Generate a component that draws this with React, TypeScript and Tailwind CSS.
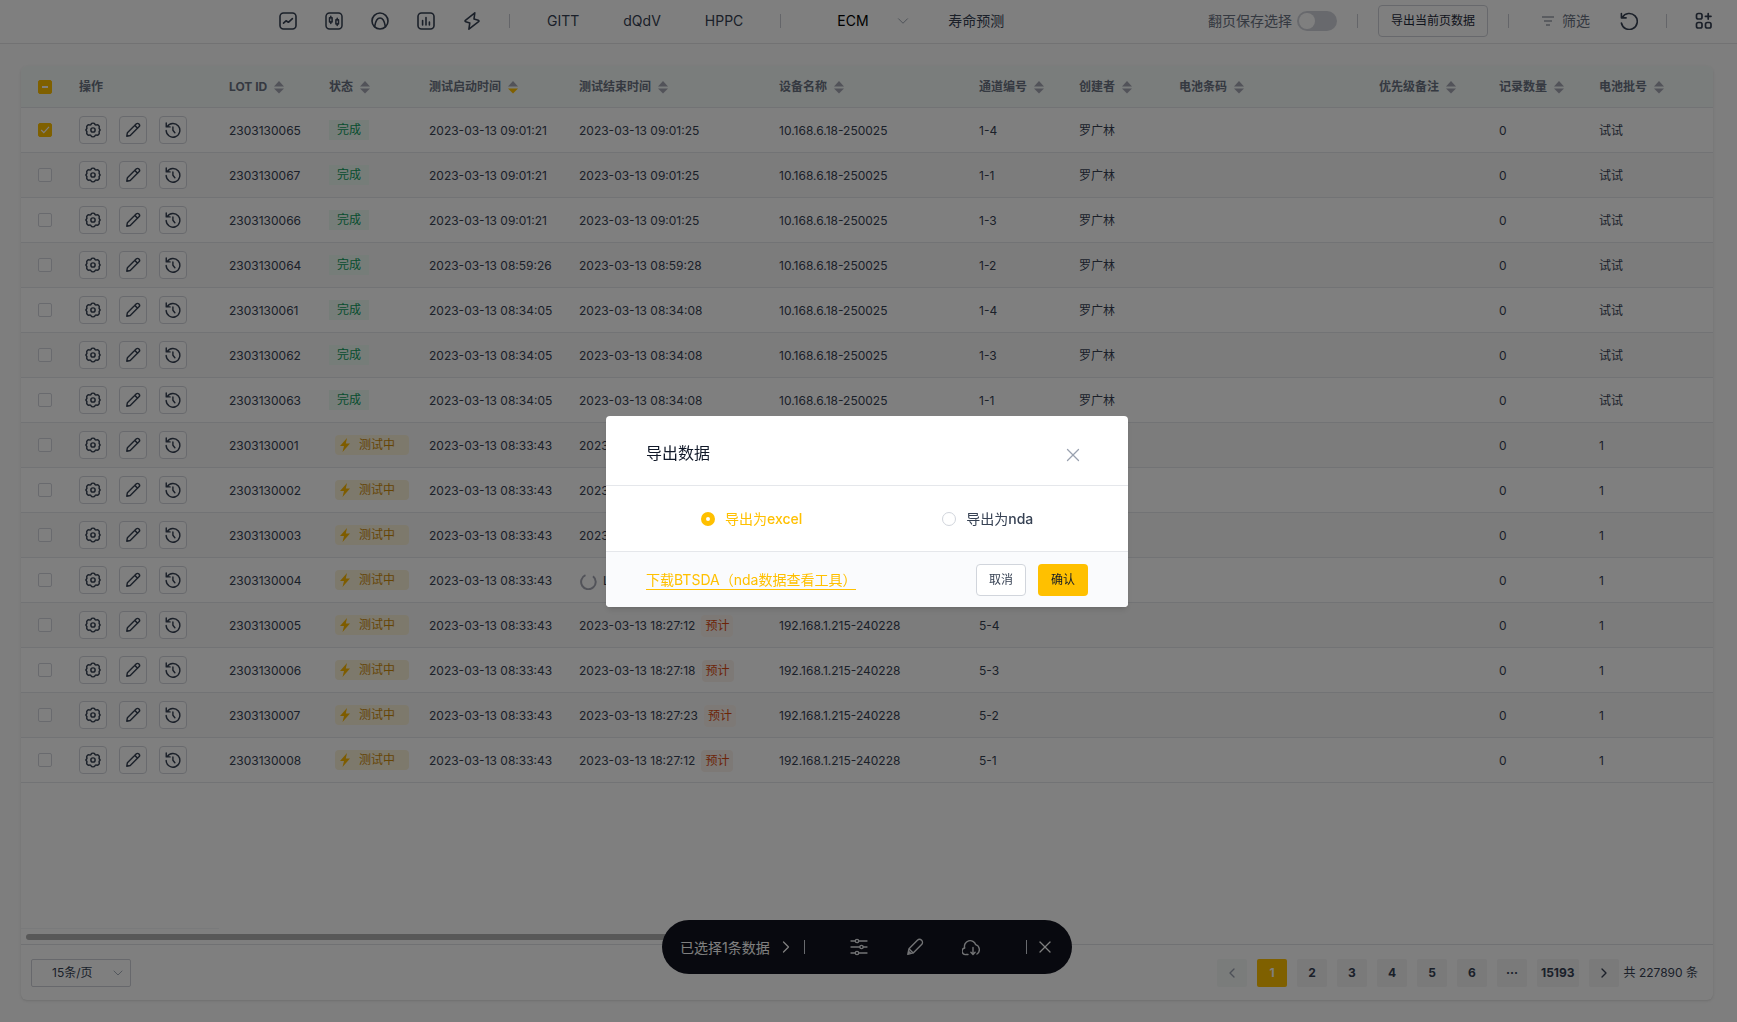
import { useState } from 'react';
import type { ReactNode } from 'react';
import { ChevronDown, ChevronLeft, ChevronRight, X } from 'lucide-react';

type Row = {
    id: string;
    start: string;
    end: string;
    device: string;
    channel: string;
    creator: string;
    batch: string;
    running?: boolean;
    loading?: boolean;
};

const DONE_DEVICE = '10.168.6.18-250025';
const RUN_DEVICE = '192.168.1.215-240228';

const done = (id: string, start: string, end: string, channel: string): Row => ({
    id, start: `2023-03-13 ${start}`, end: `2023-03-13 ${end}`, device: DONE_DEVICE, channel, creator: '罗广林', batch: '试试'
});

const running = (id: string, end: string, channel: string, loading = false): Row => ({
    id, start: '2023-03-13 08:33:43', end: `2023-03-13 ${end}`, device: RUN_DEVICE, channel, creator: '', batch: '1', running: true, loading
});

const rows: Row[] = [
    done('2303130065', '09:01:21', '09:01:25', '1-4'),
    done('2303130067', '09:01:21', '09:01:25', '1-1'),
    done('2303130066', '09:01:21', '09:01:25', '1-3'),
    done('2303130064', '08:59:26', '08:59:28', '1-2'),
    done('2303130061', '08:34:05', '08:34:08', '1-4'),
    done('2303130062', '08:34:05', '08:34:08', '1-3'),
    done('2303130063', '08:34:05', '08:34:08', '1-1'),
    running('2303130001', '18:27:12', '5-8'),
    running('2303130002', '18:27:18', '5-7'),
    running('2303130003', '18:27:12', '5-6'),
    running('2303130004', '18:27:12', '5-5', true),
    running('2303130005', '18:27:12', '5-4'),
    running('2303130006', '18:27:18', '5-3'),
    running('2303130007', '18:27:23', '5-2'),
    running('2303130008', '18:27:12', '5-1')
];

const columns = [
    { title: '操作', width: 'w-[150px]', sort: false },
    { title: 'LOT ID', width: 'w-[100px]', sort: true },
    { title: '状态', width: 'w-[100px]', sort: true },
    { title: '测试启动时间', width: 'w-[150px]', sort: true, desc: true },
    { title: '测试结束时间', width: 'w-[200px]', sort: true },
    { title: '设备名称', width: 'w-[200px]', sort: true },
    { title: '通道编号', width: 'w-[100px]', sort: true },
    { title: '创建者', width: 'w-[100px]', sort: true },
    { title: '电池条码', width: 'w-[200px]', sort: true },
    { title: '优先级备注', width: 'w-[120px]', sort: true },
    { title: '记录数量', width: 'w-[100px]', sort: true },
    { title: '电池批号', width: '', sort: true }
];

/* ---------- icons ---------- */

function Svg({ size = 18, children, width = 1.6 }: { size?: number; children: ReactNode; width?: number }) {
    return (
        <svg width={size} height={size} viewBox="0 0 18 18" fill="none" stroke="currentColor" strokeWidth={width} strokeLinecap="round" strokeLinejoin="round">
            {children}
        </svg>
    );
}

const TrendIcon = () => (
    <Svg>
        <rect x="1" y="1" width="16" height="16" rx="3.5" />
        <path d="M4.5 11.2 7 8.8l2.4 1.5 4-3.7" />
    </Svg>
);

const CandleIcon = () => (
    <Svg width={1.5}>
        <rect x="1" y="1" width="16" height="16" rx="3.5" />
        <path d="M5.8 4.2v1.6M5.8 10v1.6M12.2 6.2v1.6M12.2 12v1.6" />
        <rect x="4.5" y="5.8" width="2.6" height="4.2" />
        <rect x="10.9" y="7.8" width="2.6" height="4.2" />
    </Svg>
);

const ArcIcon = () => (
    <Svg>
        <circle cx="9" cy="9" r="8" />
        <path d="M3.6 14.6C4.6 8.5 6.6 6 9 6s4.4 2.5 5.4 8.6" />
    </Svg>
);

const BarsIcon = () => (
    <Svg>
        <rect x="1" y="1" width="16" height="16" rx="3.5" />
        <path d="M5.6 8.5V13M9 5.5V13M12.4 10v3" />
    </Svg>
);

const BoltIcon = () => (
    <Svg>
        <path d="M11.8.9 2.4 8.3c-.6.5-.4 1.300.300 1.500l4.100 1.100-.9 6.300 9.700-7.500c.6-.5.4-1.300-.3-1.500l-4.300-1.200z" />
    </Svg>
);

const RestartIcon = () => (
    <Svg>
        <path d="M2.3 5.5A8 8 0 1 1 1.4 11M1.4 1.6v4.3h4.7" />
    </Svg>
);

const AppsAddIcon = () => (
    <Svg width={1.7}>
        <rect x="1.5" y="1.5" width="5.5" height="5.5" rx="1.8" />
        <rect x="1.5" y="10.5" width="5.5" height="5.5" rx="1.8" />
        <rect x="10.5" y="10.5" width="5.5" height="5.5" rx="1.8" />
        <path d="M13.2 1.5v5.6M10.4 4.3H16" />
    </Svg>
);

const GearIcon = () => (
    <svg width="16" height="16" viewBox="0 0 24 24" fill="none" stroke="currentColor" strokeWidth="2.2" strokeLinejoin="round">
        <path d="M9.2 3.2c.8-2 4.800-2 5.600 0 .4 1.100 1.600 1.600 2.700 1.200 2-.8 4.600 1.600 3.800 3.700-.4 1.100 0 2.300.8 2.900.6.500.6 1.500 0 2-.8.600-1.200 1.800-.8 2.900.8 2.100-1.800 4.500-3.800 3.700-1.100-.4-2.300.1-2.700 1.200-.8 2-4.800 2-5.600 0-.4-1.100-1.600-1.600-2.700-1.200-2 .8-4.600-1.600-3.800-3.700.4-1.100 0-2.300-.8-2.900-.6-.5-.6-1.500 0-2 .8-.6 1.200-1.800.8-2.900-.8-2.100 1.800-4.500 3.800-3.700 1.100.4 2.300-.1 2.700-1.200z" />
        <circle cx="12" cy="12" r="3.200" />
    </svg>
);

const PencilIcon = () => (
    <Svg size={16} width={1.6}>
        <path d="M2 16l.7-4L12.5 2.2a2.100 2.100 0 0 1 3.200 3.200L5.900 15.200zM11 3.800l3.200 3.200" />
    </Svg>
);

const HistoryIcon = () => (
    <Svg size={16} width={1.6}>
        <path d="M2.5 5.2A7.700 7.700 0 1 1 1.300 9.600M1.400 1.200v4.300h4.300M8.900 5.600v3.700l2.200 2.800" />
    </Svg>
);

const EditIcon = () => (
    <Svg width={1.4}>
        <path d="M1.8 16.3l1.2-5.6 8.4-8.4a2.700 2.700 0 0 1 4.200 4.200l-8.400 8.400zM3 10.7l4.200 4.200M1.8 16.3l1-2.8 1.800 1.800z" />
    </Svg>
);

const SlidersIcon = () => (
    <Svg width={1.3}>
        <path d="M1 3h4.200M8.800 3H17M1 9h8.700M13.300 9H17M1 15h4.200M8.800 15H17" />
        <circle cx="7" cy="3" r="1.700" />
        <circle cx="11.5" cy="9" r="1.700" />
        <circle cx="7" cy="15" r="1.700" />
    </Svg>
);

const CloudIcon = () => (
    <Svg width={1.4}>
        <path d="M6 16.500H4.200A3.300 3.300 0 0 1 2.700 10 5.700 5.700 0 1 1 13.700 6.700a5.200 5.200 0 0 1 1.300 9.300M11 9.500v6.800M8.900 14.300l2.100 2.200 2.100-2.200" />
    </Svg>
);

function SortCaret({ desc }: { desc?: boolean }) {
    return (
        <svg width="10" height="13" viewBox="0 0 10 13">
            <path d="M5 0l5 5.500H0z" fill="#a4a6b3" />
            <path d="M5 12.500L0 7.500h10z" fill={desc ? '#ffc000' : '#a4a6b3'} />
        </svg>
    );
}

/* ---------- small parts ---------- */

const Divider = () => <span className="h-3.5 w-px shrink-0 bg-[#c9cbd3]" />;

function Tick({ label, checked, mixed, onChange }: { label: string; checked: boolean; mixed?: boolean; onChange: () => void }) {
    return (
        <label className="inline-grid place-items-center align-middle">
            <input
                type="checkbox"
                aria-label={label}
                checked={checked}
                onChange={onChange}
                className="col-start-1 row-start-1 size-3.5 appearance-none rounded-xs border border-[#d3d5dc] bg-white checked:border-[#ffc000] checked:bg-[#ffc000]"
            />
            {checked && (
                <svg width="10" height="10" viewBox="0 0 10 10" fill="none" stroke="white" strokeWidth="1.2" className="pointer-events-none col-start-1 row-start-1">
                    {mixed ? <path d="M2 5h6" strokeWidth="2" /> : <path d="M1.2 5l2.6 2.6L9 1.800" />}
                </svg>
            )}
        </label>
    );
}

function RowAction({ label, children }: { label: string; children: ReactNode }) {
    return (
        <button type="button" aria-label={label} className="flex size-7 items-center justify-center rounded border border-[#d3d5dc] bg-white text-gray-700">
            {children}
        </button>
    );
}

function Status({ active }: { active?: boolean }) {
    if (!active) {
        return <span className="flex h-5 w-10 items-center justify-center bg-[#ecfaf2] text-[#0f9d5e]">完成</span>;
    }
    return (
        <span className="ml-1.5 flex h-5 w-[74px] items-center gap-2 rounded bg-[#faf2d9] pl-1 text-[#cc8a0a]">
            <svg width="12" height="14" viewBox="0 0 12 14" fill="#fdb900">
                <path d="M8 0L1 8h4L3.500 14 11 5.500H6.800z" />
            </svg>
            测试中
        </span>
    );
}

/* ---------- page sections ---------- */

function TopBar() {
    const [keep, setKeep] = useState(false);
    const tools = [
        { label: '曲线', icon: <TrendIcon /> },
        { label: '箱线', icon: <CandleIcon /> },
        { label: '分布', icon: <ArcIcon /> },
        { label: '柱状', icon: <BarsIcon /> },
        { label: '快速', icon: <BoltIcon /> }
    ];

    return (
        <header className="flex h-11 shrink-0 items-center justify-between border-b border-[#e4e4e7] bg-white pr-6 pb-px pl-[265px] text-sm text-gray-700">
            <div className="flex items-center">
                {tools.map(t => (
                    <button key={t.label} type="button" aria-label={t.label} className="flex w-[46px] justify-center">
                        {t.icon}
                    </button>
                ))}
                <nav className="ml-3.5 flex items-center">
                    <Divider />
                    <div className="mx-[37px] flex gap-11">
                        <button type="button">GITT</button>
                        <button type="button">dQdV</button>
                        <button type="button">HPPC</button>
                    </div>
                    <Divider />
                    <div className="ml-14 grid w-[75px] items-center">
                        <select aria-label="ECM" className="col-start-1 row-start-1 appearance-none text-black outline-none">
                            <option>ECM</option>
                        </select>
                        <ChevronDown size={18} strokeWidth={1.3} className="pointer-events-none col-start-1 row-start-1 justify-self-end text-gray-400" />
                    </div>
                    <button type="button" className="ml-9">寿命预测</button>
                </nav>
            </div>
            <div className="flex items-center">
                <label className="flex items-center gap-[5px] text-gray-500">
                    翻页保存选择
                    <input
                        type="checkbox"
                        role="switch"
                        checked={keep}
                        onChange={() => setKeep(!keep)}
                        className="flex h-5 w-10 appearance-none items-center rounded-full bg-[#d1d3da] px-0.5 before:block before:size-4 before:rounded-full before:bg-white checked:justify-end checked:bg-[#ffc000]"
                    />
                </label>
                <div className="mx-5 flex"><Divider /></div>
                <button type="button" className="h-8 w-[110px] rounded border border-[#cfd1d8] text-xs text-gray-800">导出当前页数据</button>
                <div className="mr-[33px] ml-5 flex"><Divider /></div>
                <button type="button" className="flex items-center gap-2 text-gray-500">
                    <svg width="12" height="10" viewBox="0 0 12 10" stroke="currentColor" strokeWidth="1.2">
                        <path d="M0 1h12M2 5h8M4 9h4" />
                    </svg>
                    筛选
                </button>
                <button type="button" aria-label="刷新" className="ml-[30px]"><RestartIcon /></button>
                <div className="mr-7 ml-7 flex"><Divider /></div>
                <button type="button" aria-label="添加应用"><AppsAddIcon /></button>
            </div>
        </header>
    );
}

function TestTable() {
    const [selected, setSelected] = useState(['2303130065']);

    const toggle = (id: string) =>
        setSelected(prev => (prev.includes(id) ? prev.filter(s => s !== id) : [...prev, id]));

    return (
        <table className="w-full table-fixed text-left text-xs text-gray-700">
            <thead>
                <tr className="h-[41px] border-b border-[#e4e7ea] bg-[#f5faf8] text-gray-500">
                    <th className="w-12 pl-[17px]">
                        <Tick
                            label="全选"
                            checked={selected.length > 0}
                            mixed={selected.length < rows.length}
                            onChange={() => setSelected(selected.length ? [] : rows.map(r => r.id))}
                        />
                    </th>
                    {columns.map(c => (
                        <th key={c.title} className={`px-2.5 pt-0.5 font-bold ${c.width}`}>
                            <div className="flex items-center gap-[7px] whitespace-nowrap">
                                {c.title}
                                {c.sort && <SortCaret desc={c.desc} />}
                            </div>
                        </th>
                    ))}
                </tr>
            </thead>
            <tbody>
                {rows.map(r => (
                    <tr key={r.id} className="h-[45px] border-b border-[#e4e7ea] even:bg-[#f9f9f9]">
                        <td className="pl-[17px]">
                            <Tick label={r.id} checked={selected.includes(r.id)} onChange={() => toggle(r.id)} />
                        </td>
                        <td className="px-2.5">
                            <div className="flex gap-3">
                                <RowAction label="设置"><GearIcon /></RowAction>
                                <RowAction label="编辑"><PencilIcon /></RowAction>
                                <RowAction label="历史"><HistoryIcon /></RowAction>
                            </div>
                        </td>
                        <td className="px-2.5 pt-0.5">{r.id}</td>
                        <td className="px-2.5"><Status active={r.running} /></td>
                        <td className="px-2.5 pt-0.5 whitespace-nowrap">{r.start}</td>
                        <td className="px-2.5 pt-0.5 whitespace-nowrap">
                            {r.loading ? (
                                <span className="flex items-center gap-1.5">
                                    <svg width="18" height="18" viewBox="0 0 18 18" fill="none" stroke="#a4a6b3" strokeWidth="2">
                                        <path d="M14 4.200A7.300 7.300 0 1 1 6.500 3.200" />
                                    </svg>
                                    Loading
                                </span>
                            ) : (
                                <span className="flex items-center gap-1.5">
                                    {r.end}
                                    {r.running && <span className="rounded bg-[#fbf3ec] px-1 py-[3px] text-[#d9480f]">预计</span>}
                                </span>
                            )}
                        </td>
                        <td className="px-2.5 pt-0.5">{r.device}</td>
                        <td className="px-2.5 pt-0.5">{r.channel}</td>
                        <td className="px-2.5 pt-0.5">{r.creator}</td>
                        <td />
                        <td />
                        <td className="px-2.5 pt-0.5">0</td>
                        <td className="px-2.5 pt-0.5">{r.batch}</td>
                    </tr>
                ))}
            </tbody>
        </table>
    );
}

function Pager() {
    const pages = ['1', '2', '3', '4', '5', '6', '···', '15193'];

    return (
        <footer className="flex h-14 items-center justify-between border-t border-[#e0e2e6] pr-[15px] pl-2.5 text-xs text-gray-700">
            <div className="grid h-7 w-[100px] items-center rounded-xs border border-[#cfd1d8]">
                <select aria-label="每页条数" className="col-start-1 row-start-1 appearance-none pl-5 outline-none">
                    <option>15条/页</option>
                </select>
                <ChevronDown size={16} strokeWidth={1.3} className="pointer-events-none col-start-1 row-start-1 mr-1 justify-self-end text-gray-400" />
            </div>
            <div className="flex items-center">
                <div className="flex gap-2.5 font-bold">
                    <button type="button" aria-label="上一页" disabled className="flex h-7 w-[30px] items-center justify-center rounded-xs bg-[#f5f8f7] text-gray-400">
                        <ChevronLeft size={16} />
                    </button>
                    {pages.map(p => (
                        <button
                            key={p}
                            type="button"
                            className={`h-7 min-w-[30px] rounded-xs px-1 ${p === '1' ? 'bg-[#ffc000] text-white' : 'bg-[#f4f4f5]'}`}
                        >
                            {p}
                        </button>
                    ))}
                    <button type="button" aria-label="下一页" className="flex h-7 w-[30px] items-center justify-center rounded-xs bg-[#f4f4f5]">
                        <ChevronRight size={16} />
                    </button>
                </div>
                <span className="ml-[5px]">共 227890 条</span>
            </div>
        </footer>
    );
}

function SelectionBar() {
    return (
        <div className="fixed inset-x-0 bottom-12 flex justify-center pr-[3px]">
            <div className="flex h-[54px] w-[410px] items-center justify-between rounded-full bg-[#11131e] pr-[17px] pl-[18px] text-sm text-white">
                <div className="flex items-center">
                    <button type="button" className="flex items-center gap-1.5">
                        <span className="pt-0.5">已选择1条数据</span>
                        <ChevronRight size={20} strokeWidth={1.5} />
                    </button>
                    <span className="ml-2 h-3.5 w-px bg-gray-300" />
                </div>
                <div className="flex gap-[38px] text-gray-200">
                    <button type="button" aria-label="筛选"><SlidersIcon /></button>
                    <button type="button" aria-label="编辑"><EditIcon /></button>
                    <button type="button" aria-label="下载"><CloudIcon /></button>
                </div>
                <div className="flex items-center gap-2">
                    <span className="h-3.5 w-px bg-gray-300" />
                    <button type="button" aria-label="取消选择"><X size={20} strokeWidth={1.5} /></button>
                </div>
            </div>
        </div>
    );
}

function ExportDialog() {
    const [format, setFormat] = useState('excel');

    return (
        <div className="fixed inset-0 flex items-center justify-center bg-black/50 pt-px pr-[3px]">
            <div role="dialog" aria-label="导出数据" className="w-[522px] overflow-hidden rounded bg-white shadow-md">
                <div className="flex h-[70px] items-center justify-between border-b border-gray-200 px-10 pt-1 text-base text-gray-900">
                    <h2>导出数据</h2>
                    <button type="button" aria-label="关闭" className="mt-1 mr-1 text-gray-400">
                        <X size={22} strokeWidth={1.4} />
                    </button>
                </div>
                <div className="flex h-[66px] items-center gap-[140px] border-b border-gray-200 pl-[95px] text-sm">
                    {['excel', 'nda'].map(f => (
                        <label key={f} className={`flex items-center gap-2.5 ${format === f ? 'text-[#ffc000]' : 'text-gray-700'}`}>
                            <input
                                type="radio"
                                name="format"
                                checked={format === f}
                                onChange={() => setFormat(f)}
                                className="size-3.5 appearance-none rounded-full border border-gray-300 bg-white checked:border-5 checked:border-[#ffc000]"
                            />
                            <span>导出为<span className="font-medium">{f}</span></span>
                        </label>
                    ))}
                </div>
                <div className="flex h-[55px] items-center justify-between bg-[#fafbfd] px-10">
                    <a href="#" className="border-b border-[#ffc000] pt-0.5 text-sm leading-[18px] text-[#ffc000]">下载BTSDA（nda数据查看工具）</a>
                    <div className="flex gap-3 text-xs">
                        <button type="button" className="h-8 w-[50px] rounded border border-gray-300 bg-white text-gray-700">取消</button>
                        <button type="button" className="h-8 w-[50px] rounded bg-[#ffc000] text-gray-900">确认</button>
                    </div>
                </div>
            </div>
        </div>
    );
}

export default function App() {
    return (
        <div className="flex min-h-screen flex-col bg-[#fcfcfc] font-['Inter','Noto_Sans_CJK_SC',sans-serif]">
            <TopBar />
            <main className="flex flex-1 flex-col pt-[22px] pr-6 pb-[22px] pl-[21px]">
                <div className="flex flex-1 flex-col overflow-hidden rounded-md bg-white shadow">
                    <TestTable />
                    <div className="mt-auto">
                        <div className="w-[198px] border-t border-gray-100" />
                        <div className="px-[5px] pt-[5px] pb-1">
                            <div className="h-1.5 w-1/2 rounded-full bg-[#b0b0b0]" />
                        </div>
                    </div>
                    <Pager />
                </div>
            </main>
            <SelectionBar />
            <ExportDialog />
        </div>
    );
}
